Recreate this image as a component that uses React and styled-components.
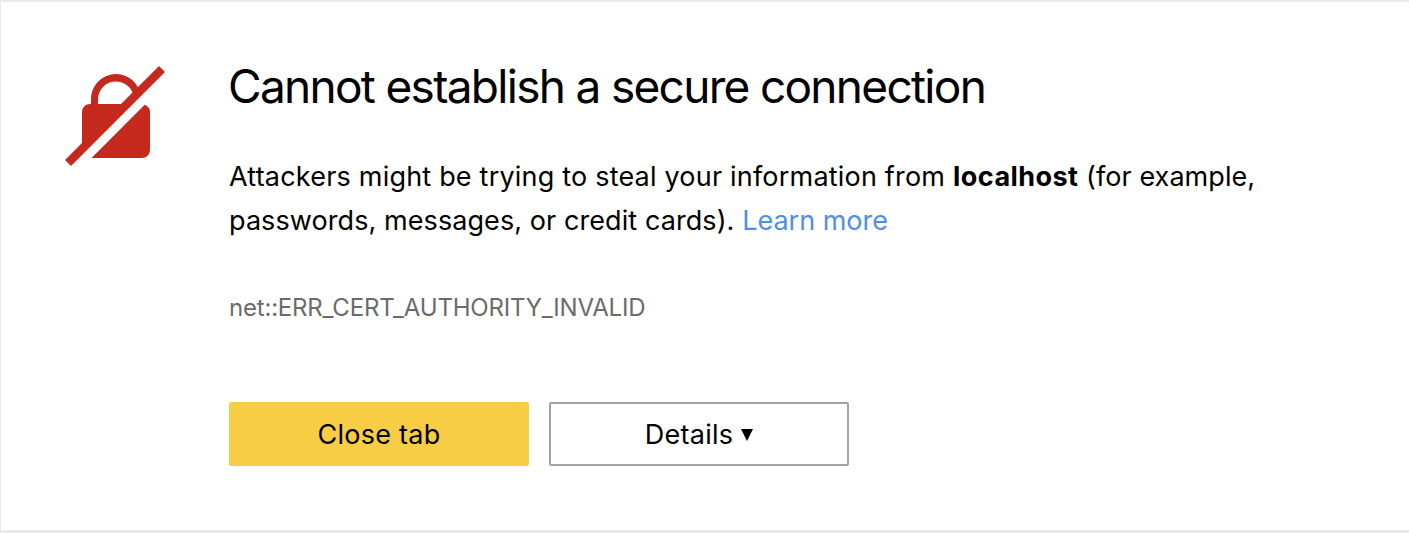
import React from "react";
import styled, { createGlobalStyle } from "styled-components";

const GlobalStyle = createGlobalStyle`
  * { box-sizing: border-box; }
  body { margin: 0; background: #fff; font-family: Inter, "Liberation Sans", sans-serif; color: #000; }
`;
const Page = styled.main`
  display: flex;
  align-items: flex-start;
  height: 533px;
  padding: 64px 0 0 64px;
  overflow: hidden;
  border-top: 2px solid #eaeaea;
  border-left: 1px solid #eaeaea;
  border-bottom: 3px solid #eaeaea;
`;
const LockIcon = styled.svg`
  flex: none;
  width: 100px;
  height: 100px;
  margin-right: 64px;
`;
const Content = styled.div`
  display: flex;
  flex-direction: column;
  align-items: flex-start;
`;
const Title = styled.h1`
  margin: -9px 0 0 -1px;
  font-size: 46px;
  line-height: 58px;
  font-weight: 400;
  letter-spacing: -1.7px;
  white-space: nowrap;
`;
const Message = styled.p`
  margin: 40px 0 0;
  font-size: 27px;
  line-height: 44px;
  white-space: nowrap;
`;
const Text = styled.span`
  letter-spacing: ${(p) => p.$spacing}px;
`;
const Host = styled.b`
  letter-spacing: 0.45px;
`;
const Link = styled.a`
  color: #528de6;
  text-decoration: none;
`;
const ErrorCode = styled.p`
  margin: 49px 0 0;
  font-size: 24px;
  line-height: 32px;
  letter-spacing: -0.2px;
  color: #6b6b6b;
  white-space: nowrap;
`;
const Actions = styled.div`
  display: flex;
  gap: 20px;
  margin-top: 78px;
`;
const Button = styled.button`
  display: flex;
  align-items: center;
  justify-content: center;
  gap: 8px;
  width: 300px;
  height: 64px;
  padding: 2px 0 0;
  border: 2px solid ${(p) => (p.$primary ? "#f7cd45" : "#a3a3a3")};
  border-radius: 2px;
  background: ${(p) => (p.$primary ? "#f7cd45" : "#fff")};
  color: #000;
  font: 400 27px/32px Inter, "Liberation Sans", sans-serif;
  letter-spacing: 0.25px;
`;
const Arrow = styled.svg`
  width: 12px;
  height: 12px;
`;

export default function App() {
  return (
    <>
      <GlobalStyle />
      <Page>
        <LockIcon viewBox="0 0 100 100" fill="#c5281c" aria-hidden="true">
          <path d="M26 38V33A25 25 0 0 1 72.7 20.7L74 24l-5 5l-1.3-2.3A18 18 0 0 0 33 33v5h23v6L17 83V46a8 8 0 0 1 8-8z" />
          <path d="M79.7 38.7Q85 41 85 46v38a8 8 0 0 1-8 8H26.5z" />
          <path d="M94 0l6 6L6 100l-6-6z" />
        </LockIcon>
        <Content>
          <Title>Cannot establish a secure connection</Title>
          <Message>
            <Text $spacing={0.2}>Attackers might be trying to steal your information from </Text>
            <Host>localhost</Host>
            <Text $spacing={0.06}> (for example,</Text>
            <br />
            <Text $spacing={0.08}>passwords, messages, or credit cards). </Text>
            <Link href="#">Learn more</Link>
          </Message>
          <ErrorCode>net::ERR_CERT_AUTHORITY_INVALID</ErrorCode>
          <Actions>
            <Button $primary>Close tab</Button>
            <Button>
              Details
              <Arrow viewBox="0 0 12 12" aria-hidden="true">
                <path d="M0 0h12L6 12z" />
              </Arrow>
            </Button>
          </Actions>
        </Content>
      </Page>
    </>
  );
}
